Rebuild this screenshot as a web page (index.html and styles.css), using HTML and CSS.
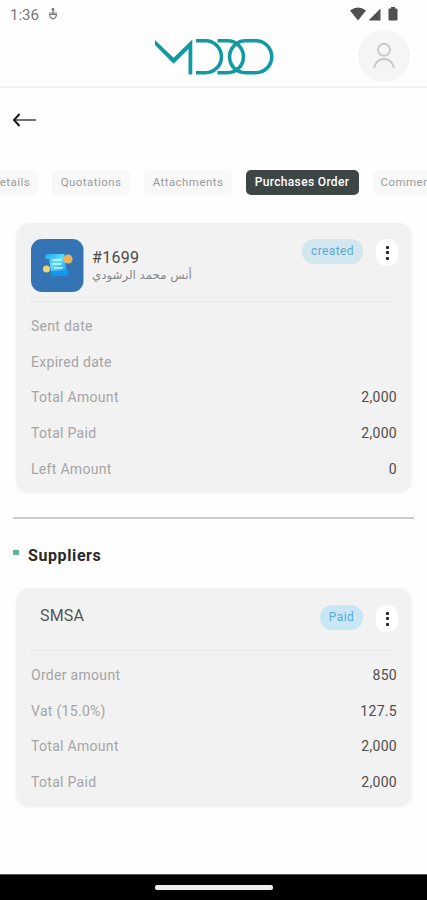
FILE: index.html
```html
<!DOCTYPE html>
<html lang="en">
<head>
<meta charset="utf-8">
<title>Purchases Order</title>
<link rel="stylesheet" href="styles.css">
</head>
<body>
<div class="screen">
  <header class="top">
    <div class="status">
      <span class="clock">1:36</span>
      <svg class="status-app" width="10" height="14" viewBox="0 0 10 14" fill="none" stroke="#777"><circle cx="5" cy="2.500" r="1.400" fill="#777" stroke="none"/><path d="M5 3v4M1 6h8" stroke-width="1.200"/><path d="M1.600 7.500Q1.700 11 5 12Q8.300 11 8.400 7.500Z" stroke-width="1.200"/></svg>
      <svg class="status-icons" width="48" height="14" viewBox="0 0 48 14" fill="#505050"><path d="M0 3.500Q8 -2.500 16 3.500L8 13.500Z"/><path d="M18.500 13.500H30.500V1.500Z"/><path d="M39 1.500h2V0h4v1.500h1.500q1 0 1 1V12.500q0 1-1 1h-7q-1 0-1-1V2.500q0-1 .5-1Z"/></svg>
    </div>
    <div class="brand">
      <svg class="logo" width="120" height="38" viewBox="0 0 120 38" fill="none" stroke="#129aa2" stroke-width="3.600"><path d="M0 2L18.600 19.800L37.300 1.500V36.500H33.500V11L18.600 25.700L0 7Z" fill="#129aa2" stroke="none"/><path d="M41 2.800H50.500A15.800 15.800 0 0 1 50.500 34.700H41"/><path d="M62.500 2.800H72.500A15.800 15.800 0 0 1 72.500 34.700H62.500"/><path d="M90.500 2.800H100.800A15.900 15.900 0 0 1 100.800 34.700H90.500A15.900 15.900 0 0 1 90.500 2.800Z"/></svg>
      <div class="avatar"><svg width="22" height="26" viewBox="0 0 22 26" fill="none" stroke="#c6c6c6" stroke-width="1.800"><circle cx="11" cy="6.800" r="6"/><path d="M1.300 25C2.500 13 19.500 13 20.700 25"/></svg></div>
    </div>
  </header>
  <div class="back"><svg width="25" height="14" viewBox="0 0 25 14" fill="none"><path d="M2 7H24" stroke="#5c5c5c" stroke-width="1.700"/><path d="M7.500 1L2 7L7.500 13" stroke="#1b1b1b" stroke-width="2"/></svg></div>
  <nav class="tabs">
    <span class="tab tab-details">Details</span><span class="tab tab-quotations">Quotations</span><span class="tab tab-attachments">Attachments</span><span class="tab tab-active">Purchases Order</span><span class="tab tab-comments">Comments</span>
  </nav>
  <section class="card order">
    <div class="card-head">
      <svg class="thumb" width="53" height="53" viewBox="0 0 53 53"><defs><linearGradient id="paper" x2="1" y2="1"><stop stop-color="#17a8ee"/><stop offset=".5" stop-color="#63dcfb"/><stop offset="1" stop-color="#169df0"/></linearGradient></defs><rect width="52.500" height="53" rx="11" fill="#3474b5"/><path d="M14 18Q14 15 17 15H34Q32 17 33 20L36 32H20L18 20H15Z" fill="url(#paper)"/><path d="M20 32H38Q38 37 34 37H22Q19 36 20 32Z" fill="#1595ed"/><path d="M21 21h10M21.500 25h9M23 29h9" stroke="#c9f6ff" stroke-width="1.500"/><circle cx="37" cy="20" r="4.600" fill="#e9b25b"/><circle cx="15.500" cy="30" r="3.500" fill="#f1d276"/></svg>
      <div class="who"><div class="number">#1699</div><div class="person" lang="ar" dir="rtl">أنس محمد الرشودي</div></div>
      <span class="badge badge-created">created</span>
      <span class="more"><i></i><i></i><i></i></span>
    </div>
    <dl class="rows">
      <div><dt>Sent date</dt><dd></dd></div>
      <div><dt>Expired date</dt><dd></dd></div>
      <div><dt>Total Amount</dt><dd>2,000</dd></div>
      <div><dt>Total Paid</dt><dd>2,000</dd></div>
      <div><dt>Left Amount</dt><dd>0</dd></div>
    </dl>
  </section>
  <hr class="divider">
  <h2 class="heading"><span class="bullet"></span>Suppliers</h2>
  <section class="card supplier">
    <div class="card-head">
      <div class="name">SMSA</div>
      <span class="badge badge-paid">Paid</span>
      <span class="more"><i></i><i></i><i></i></span>
    </div>
    <dl class="rows">
      <div><dt>Order amount</dt><dd>850</dd></div>
      <div><dt>Vat (15.0%)</dt><dd>127.5</dd></div>
      <div><dt>Total Amount</dt><dd>2,000</dd></div>
      <div><dt>Total Paid</dt><dd>2,000</dd></div>
    </dl>
  </section>
  <footer class="navbar"><span class="handle"></span></footer>
</div>
</body>
</html>
```
FILE: styles.css
```css
* { box-sizing: border-box; }
body { margin: 0; background: #fefefe; font-family: Roboto, "Noto Sans", "DejaVu Sans", sans-serif; }
.screen { width: 427px; height: 900px; overflow: hidden; display: flex; flex-direction: column; background: #fefefe; }
.screen > * { flex-shrink: 0; }
.top { height: 88px; border-bottom: 2px solid #f1f1f1; }
.status { height: 30px; display: flex; align-items: flex-start; padding: 6px 29px 0 10px; }
.clock { width: 29px; font-size: 15px; line-height: 18px; color: #777; white-space: nowrap; }
.status-app { margin: 1px 0 0 9px; }
.status-icons { margin-top: 0.5px; margin-left: auto; }
.brand { height: 56px; display: flex; align-items: flex-start; padding: 0 17px 0 155px; }
.logo { margin-top: 8px; }
.avatar { width: 52px; height: 52px; margin-left: auto; border-radius: 50%; background: #f5f5f5; display: flex; align-items: center; justify-content: center; }
.back { height: 82px; padding: 24px 0 0 12px; }
.tabs { height: 25px; display: flex; gap: 14px; }
.tab { flex: none; height: 25px; border-radius: 5px; background: #f8f8f8; color: #9b9b9b; font-size: 11.5px; line-height: 25px; text-align: center; letter-spacing: .45px; white-space: nowrap; }
.tab-details { width: 62px; margin-left: -24px; padding-left: 8px; }
.tab-quotations { width: 78px; }
.tab-attachments { width: 88px; }
.tab-active { width: 113px; margin-left: -0.5px; background: #3d4644; color: #fff; font-size: 12px; letter-spacing: .35px; font-weight: 500; }
.tab-comments { width: 76px; }
.card { width: 394px; margin-left: 17px; padding: 0 14px; border-radius: 12px; background: #f2f2f2; box-shadow: 0 2px 4px rgba(0,0,0,.09); }
.card-head { display: flex; align-items: flex-start; }
.order { height: 267px; margin-top: 28px; }
.order .card-head { height: 79px; padding-top: 16px; border-bottom: 1px solid #e8e8e8; }
.who { margin-left: 8px; }
.number { margin-top: 9px; font-size: 16px; line-height: 19px; letter-spacing: .3px; color: #4b4b4b; }
.person { font-family: "DejaVu Sans", sans-serif; font-size: 11.8px; line-height: 16px; color: #888; white-space: nowrap; }
.badge { height: 25px; margin-left: auto; border-radius: 12px; color: #57a9dc; font-size: 12px; line-height: 25px; text-align: center; letter-spacing: .4px; }
.badge-created { width: 61px; background: #d2e7ee; }
.badge-paid { width: 43px; background: #c9e6f5; }
.more { width: 22px; height: 27px; margin-left: 13px; margin-right: -1px; border-radius: 10px; background: #fff; display: flex; flex-direction: column; align-items: center; justify-content: center; gap: 2.500px; }
.more i { width: 3px; height: 3px; border-radius: 1px; background: #222; }
.rows { margin: 0; padding-top: 6px; }
.rows div { height: 35.8px; display: flex; justify-content: space-between; align-items: center; font-size: 14px; letter-spacing: .3px; }
dt { color: #a5a5a5; }
dd { margin: 0; color: #4e4e4e; }
.divider { width: 401px; height: 2px; margin: 27px 0 0 13px; border: 0; background: #cbcbcb; }
.heading { height: 69px; margin: 0; padding: 27px 0 0 13px; display: flex; align-items: flex-start; font-size: 16px; line-height: 19px; font-weight: 700; letter-spacing: .6px; color: #292929; }
.bullet { width: 6px; height: 5px; margin: 4px 9px 0 0; background: #5eb594; }
.supplier { height: 216px; }
.supplier .card-head { height: 63px; padding-top: 17px; border-bottom: 1px solid #e8e8e8; }
.name { margin-top: 1px; margin-left: 9px; font-size: 16px; line-height: 20px; letter-spacing: .2px; color: #555; }
.navbar { height: 26px; margin-top: auto; border-top: 1px solid #555; background: #000; display: flex; justify-content: center; }
.handle { width: 118px; height: 5px; margin-top: 10px; border-radius: 2px; background: #eee; }
```
